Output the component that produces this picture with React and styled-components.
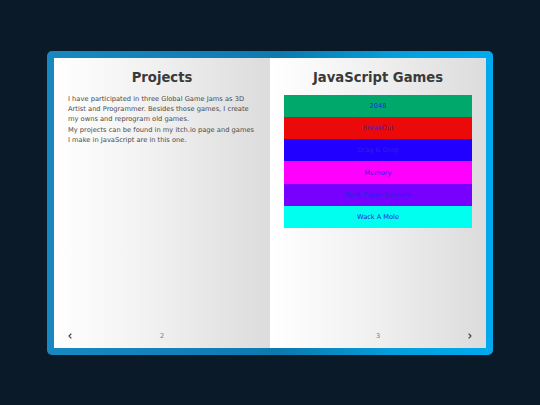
import React from "react";
import styled, { createGlobalStyle } from "styled-components";
import { ChevronLeft, ChevronRight } from "lucide-react";

const games = [
  { name: "2048", bg: "#00a86b" },
  { name: "BreakOut", bg: "#ec0909" },
  { name: "Drag & Drop", bg: "#2200ff" },
  { name: "Memory", bg: "#ff00ff" },
  { name: "Rock Paper Scissors", bg: "#7700ff" },
  { name: "Wack A Mole", bg: "#00ffee" },
];

const App = () => {
  return (
    <>
      <GlobalStyle />
      <Screen>
        <Book>
          <Page>
            <Title>Projects</Title>
            <Text>
              I have participated in three Global Game Jams as 3D Artist and
              Programmer. Besides those games, I create my owns and reprogram
              old games.
              <br />
              My projects can be found in my itch.io page and games I make in
              JavaScript are in this one.
            </Text>
            <Footer>
              <Arrow>
                <ChevronLeft size={8} strokeWidth={3.5} />
              </Arrow>
              <PageNum>2</PageNum>
              <Arrow />
            </Footer>
          </Page>
          <Page>
            <Title>JavaScript Games</Title>
            <GameList>
              {games.map((g) => (
                <GameRow key={g.name} $bg={g.bg}>
                  <GameLink href="#">{g.name}</GameLink>
                </GameRow>
              ))}
            </GameList>
            <Footer>
              <Arrow />
              <PageNum>3</PageNum>
              <Arrow>
                <ChevronRight size={8} strokeWidth={3.5} />
              </Arrow>
            </Footer>
          </Page>
        </Book>
      </Screen>
    </>
  );
};

const GlobalStyle = createGlobalStyle`
  html, body {
    margin: 0;
    padding: 0;
    background: #0a1a29;
    font-family: "DejaVu Sans", "Noto Sans", sans-serif;
    -webkit-font-smoothing: antialiased;
  }
`;

const Screen = styled.div`
  width: 540px;
  height: 405px;
  display: flex;
  align-items: center;
  justify-content: center;
`;

const Book = styled.div`
  width: 432px;
  height: 290px;
  padding: 7px;
  border-radius: 5px;
  background: linear-gradient(90deg, #1888c1 0%, #0d7db3 45%, #0b7aae 52%, #049fdc 78%, #00aaee 100%);
  display: grid;
  grid-template-columns: 1fr 1fr;
`;

const Page = styled.div`
  background: linear-gradient(90deg, #ffffff 0%, #f1f1f1 45%, #dcdcdc 100%);
  display: flex;
  flex-direction: column;
  padding: 11px 14px 6px 14px;
`;

const Title = styled.h2`
  margin: 0;
  text-align: center;
  font-size: 13.2px;
  line-height: 17px;
  font-weight: bold;
  color: #3a3a3a;
`;

const Text = styled.p`
  margin: 8px 0 0 0;
  font-size: 6.7px;
  line-height: 10.4px;
  color: #4a4a4a;
`;

const GameList = styled.div`
  margin-top: 9px;
  display: flex;
  flex-direction: column;
`;

const GameRow = styled.div`
  height: 22.3px;
  background: ${(p) => p.$bg};
  display: flex;
  align-items: center;
  justify-content: center;
`;

const GameLink = styled.a`
  font-size: 6.6px;
  color: #2a22dd;
  text-decoration: none;
`;

const Footer = styled.div`
  margin: auto -2px 0 -2px;
  display: grid;
  grid-template-columns: 8px 1fr 8px;
  align-items: center;
  height: 12px;
`;

const Arrow = styled.div`
  display: flex;
  justify-content: center;
  color: #444;

  svg {
    flex-shrink: 0;
  }
`;

const PageNum = styled.div`
  text-align: center;
  font-size: 6.5px;
  color: #777;
`;

export default App;
